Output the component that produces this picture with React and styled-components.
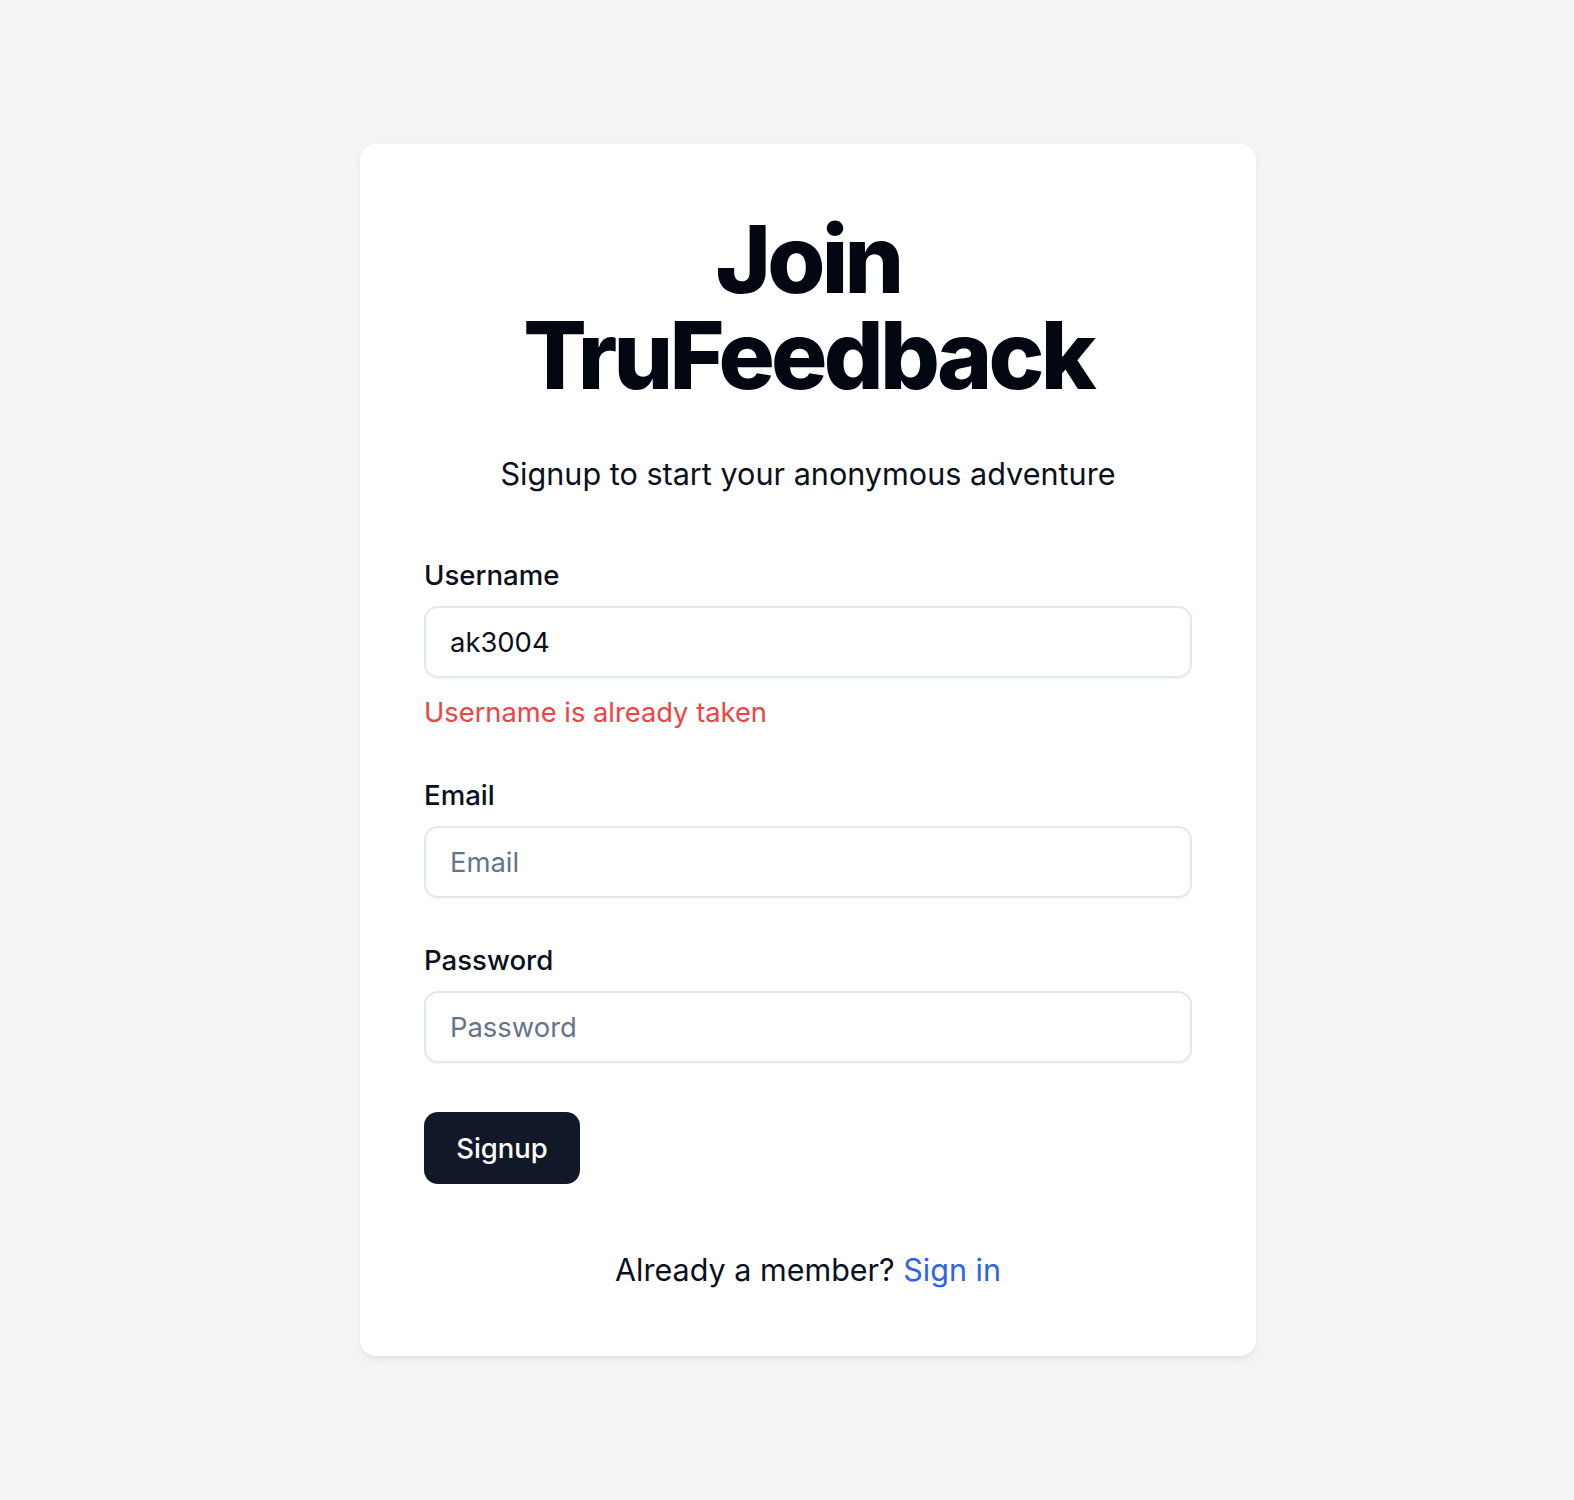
import React from "react";
import styled, { createGlobalStyle } from "styled-components";

const
	GlobalStyle = createGlobalStyle`
		html, body {
			margin: 0;
			padding: 0;
			background: #f3f4f6;
		}
		body {
			font-family: Inter, "Noto Sans", "Liberation Sans", sans-serif;
			color: #020617;
		}
	`,
	Page = styled.div`
		min-height: 100vh;
		display: flex;
		align-items: center;
		justify-content: center;
		padding-left: 42px;
		box-sizing: border-box;
	`,
	Card = styled.div`
		width: 896px;
		box-sizing: border-box;
		padding: 67px 64px 62px 64px;
		background: #fff;
		border-radius: 16px;
		box-shadow: 0 4px 10px -2px rgba(0, 0, 0, .08), 0 2px 4px -2px rgba(0, 0, 0, .06);
	`,
	Header = styled.div`
		text-align: center;
	`,
	Title = styled.h1`
		margin: 0;
		font-size: 94px;
		line-height: 96px;
		font-weight: 800;
		letter-spacing: -0.04em;
		color: #030712;
	`,
	Subtitle = styled.p`
		margin: 47px 0 0;
		font-size: 30.6px;
		line-height: 48px;
		color: #0b1020;
	`,
	Form = styled.form`
		margin-top: 57px;
		display: flex;
		flex-direction: column;
	`,
	Field = styled.div`
		display: flex;
		flex-direction: column;
		gap: 11px;
		margin-top: ${p => p.$gap || 0}px;
	`,
	Label = styled.label`
		font-size: 27.6px;
		line-height: 40px;
		font-weight: 500;
		color: #0b1020;
	`,
	Input = styled.input`
		height: 72px;
		box-sizing: border-box;
		border: 2px solid #e2e8f0;
		border-radius: 14px;
		padding: 0 24px;
		font-family: inherit;
		font-size: 27.4px;
		color: #0b1020;
		background: #fff;
		box-shadow: 0 1px 2px rgba(0, 0, 0, .04);
		outline: none;
		&::placeholder {
			color: #64748b;
		}
	`,
	ErrorText = styled.p`
		margin: 15px 0 0;
		font-size: 27.3px;
		line-height: 40px;
		color: #ef4444;
	`,
	Button = styled.button`
		margin-top: 49px;
		align-self: flex-start;
		width: 156px;
		height: 72px;
		border: none;
		border-radius: 14px;
		background: #111827;
		color: #fff;
		font-family: inherit;
		font-size: 27.4px;
		font-weight: 500;
		cursor: pointer;
	`,
	Footer = styled.p`
		margin: 62px 0 0;
		text-align: center;
		font-size: 30.5px;
		line-height: 48px;
		color: #0b1020;
	`,
	Link = styled.a`
		color: #2f63eb;
		text-decoration: none;
	`;

export default function App() {
	return (
		<Page>
			<GlobalStyle />
			<Card>
				<Header>
					<Title>Join<br />TruFeedback</Title>
					<Subtitle>Signup to start your anonymous adventure</Subtitle>
				</Header>
				<Form onSubmit={e => e.preventDefault()}>
					<Field>
						<Label>Username</Label>
						<Input defaultValue="ak3004" placeholder="username" />
					</Field>
					<ErrorText>Username is already taken</ErrorText>
					<Field $gap={42}>
						<Label>Email</Label>
						<Input placeholder="Email" />
					</Field>
					<Field $gap={42}>
						<Label>Password</Label>
						<Input type="password" placeholder="Password" />
					</Field>
					<Button type="submit">Signup</Button>
				</Form>
				<Footer>
					Already a member? <Link href="#">Sign in</Link>
				</Footer>
			</Card>
		</Page>
	);
}
